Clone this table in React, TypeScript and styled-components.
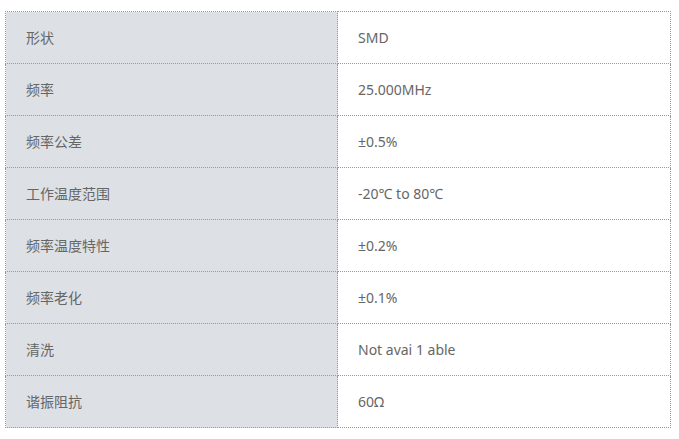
import React from "react";
import styled, { createGlobalStyle } from "styled-components";

const Global = createGlobalStyle`
  html, body { margin: 0; padding: 0; background: #fff; }
  body { font-family: "Noto Sans", "Noto Sans CJK SC", sans-serif; }
`;

const Wrap = styled.div`
  padding: 11px 0 0 5px;
`;

const Table = styled.table`
  border-collapse: collapse;
  width: 666px;
  table-layout: fixed;
`;

const Row = styled.tr`
  height: 52px;
`;

const Cell = styled.td<{ $label?: boolean }>`
  border: 1px dotted #999;
  padding: 0 0 1px 20px;
  font-size: 14px;
  color: #666;
  vertical-align: middle;
  background: ${(p) => (p.$label ? "#dde1e5" : "#fff")};
  width: ${(p) => (p.$label ? "311px" : "auto")};
`;

const rows: [string, string][] = [
  ["形状", "SMD"],
  ["频率", "25.000MHz"],
  ["频率公差", "±0.5%"],
  ["工作温度范围", "-20℃ to 80℃"],
  ["频率温度特性", "±0.2%"],
  ["频率老化", "±0.1%"],
  ["清洗", "Not avai 1 able"],
  ["谐振阻抗", "60Ω"],
];

export default function App() {
  return (
    <>
      <Global />
      <Wrap>
        <Table>
          <tbody>
            {rows.map(([k, v]) => (
              <Row key={k}>
                <Cell $label>{k}</Cell>
                <Cell>{v}</Cell>
              </Row>
            ))}
          </tbody>
        </Table>
      </Wrap>
    </>
  );
}
